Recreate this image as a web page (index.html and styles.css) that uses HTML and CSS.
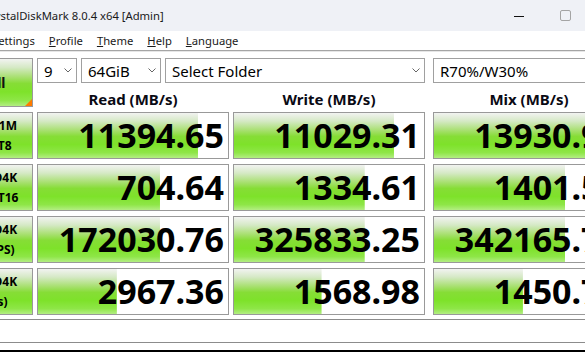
FILE: index.html
```html
<!DOCTYPE html>
<html lang="en">
<head>
    <meta charset="UTF-8">
    <meta name="viewport" content="width=device-width, initial-scale=1.0">
    <title>CrystalDiskMark 8.0.4 x64 [Admin]</title>
    <link rel="stylesheet" href="styles.css">
</head>
<body>
    <div class="window">
        <!-- Title bar -->
        <div class="titlebar">
            <span class="title">CrystalDiskMark 8.0.4 x64 [Admin]</span>
            <div class="caption">
                <span class="cap-btn">
                    <svg width="10" height="10" viewBox="0 0 10 10"><line x1="0" y1="5.5" x2="10" y2="5.5" stroke="#111" stroke-width="1"/></svg>
                </span>
                <span class="cap-btn">
                    <svg width="11" height="11" viewBox="0 0 11 11"><rect x="0.5" y="0.5" width="10" height="10" rx="1.5" fill="none" stroke="#a4a4a4"/></svg>
                </span>
                <span class="cap-btn">
                    <svg width="10" height="10" viewBox="0 0 10 10"><path d="M0 0 L10 10 M10 0 L0 10" stroke="#111"/></svg>
                </span>
            </div>
        </div>

        <!-- Menu -->
        <div class="menubar">
            <span><u>F</u>ile</span>
            <span><u>S</u>ettings</span>
            <span><u>P</u>rofile</span>
            <span><u>T</u>heme</span>
            <span><u>H</u>elp</span>
            <span><u>L</u>anguage</span>
        </div>

        <!-- Results board -->
        <div class="board">
            <button class="all-btn">All</button>

            <div class="controls">
                <div class="select sel-count">
                    <span class="value">9</span>
                    <svg class="chev" width="8" height="5" viewBox="0 0 8 5"><path d="M0.5 0.5 L4 4 L7.5 0.5" fill="none" stroke="#666"/></svg>
                </div>
                <div class="select sel-size">
                    <span class="value">64GiB</span>
                    <svg class="chev" width="8" height="5" viewBox="0 0 8 5"><path d="M0.5 0.5 L4 4 L7.5 0.5" fill="none" stroke="#666"/></svg>
                </div>
                <div class="select sel-drive">
                    <span class="value">Select Folder</span>
                    <svg class="chev" width="8" height="5" viewBox="0 0 8 5"><path d="M0.5 0.5 L4 4 L7.5 0.5" fill="none" stroke="#666"/></svg>
                </div>
            </div>
            <div class="select mix-col">
                <span class="value">R70%/W30%</span>
                <svg class="chev" width="8" height="5" viewBox="0 0 8 5"><path d="M0.5 0.5 L4 4 L7.5 0.5" fill="none" stroke="#666"/></svg>
            </div>

            <div class="head">Read (MB/s)</div>
            <div class="head">Write (MB/s)</div>
            <div class="head mix-col">Mix (MB/s)</div>

            <!-- SEQ1M -->
            <div class="label">SEQ1M<br>Q1T8</div>
            <div class="cell" style="background-size: 84.2% 100%">11394.65</div>
            <div class="cell" style="background-size: 84.2% 100%">11029.31</div>
            <div class="cell mix-col" style="background-size: 85.6% 100%">13930.98</div>

            <!-- RND4K Q32T16 -->
            <div class="label">RND4K<br>Q32T16</div>
            <div class="cell" style="background-size: 64.2% 100%">704.64</div>
            <div class="cell" style="background-size: 68.8% 100%">1334.61</div>
            <div class="cell mix-col" style="background-size: 69.1% 100%">1401.54</div>

            <!-- IOPS -->
            <div class="label">RND4K<br>(IOPS)</div>
            <div class="cell" style="background-size: 64.2% 100%">172030.76</div>
            <div class="cell" style="background-size: 68.8% 100%">325833.25</div>
            <div class="cell mix-col" style="background-size: 69.1% 100%">342165.74</div>

            <!-- latency -->
            <div class="label">RND4K<br>(μs)</div>
            <div class="cell" style="background-size: 41.5% 100%">2967.36</div>
            <div class="cell" style="background-size: 46.1% 100%">1568.98</div>
            <div class="cell mix-col" style="background-size: 46.8% 100%">1450.72</div>
        </div>

        <!-- Comment -->
        <div class="comment"></div>
    </div>
</body>
</html>
```

FILE: styles.css
```css
html, body {
    margin: 0;
    padding: 0;
    background-color: #000;
    overflow: hidden;
    height: 352px;
}

body {
    font-family: "Noto Sans", "DejaVu Sans", sans-serif;
    color: #000;
}

.window {
    width: 674px;
    height: 350px;
    margin-left: -40px;
    background-color: #fff;
    overflow: hidden;
}

/* title bar */
.titlebar {
    display: flex;
    align-items: center;
    height: 31px;
    padding-left: 23px;
    background-color: #eff1f6;
}

.title {
    font-size: 11.25px;
    color: #1a1a1a;
}

.caption {
    display: flex;
    margin-left: auto;
    height: 100%;
}

.cap-btn {
    display: flex;
    align-items: center;
    justify-content: center;
    width: 46px;
}

/* menu */
.menubar {
    display: flex;
    align-items: center;
    gap: 14px;
    height: 19px;
    font-size: 11.25px;
    color: #1a1a1a;
    border-bottom: 1px solid #a5a5a5;
    box-shadow: 0 1px 0 #e6e6e6;
}

/* board */
.board {
    display: grid;
    grid-template-columns: 73px 192px 192px 196px;
    grid-template-rows: 25px 19px repeat(4, 47px);
    column-gap: 4px;
    row-gap: 5px;
    margin-top: 7px;
}

.mix-col {
    margin-left: 4px;
}

.all-btn {
    grid-row: 1 / 3;
    position: relative;
    margin: 0;
    padding: 0;
    font-family: inherit;
    font-size: 14px;
    font-weight: bold;
    color: #111;
    border: 1px solid #999;
    background-image: linear-gradient(to bottom, #f2f3f1 0%, #d5e9c5 18%, #a9e072 38%, #86dd36 52%, #7ee22a 70%, #8ee647 88%, #b3ee83 100%);
}

.all-btn::after {
    content: "";
    position: absolute;
    right: 0;
    bottom: 0;
    border-style: solid;
    border-width: 0 0 7px 7px;
    border-color: transparent transparent #ff7a00 transparent;
}

.controls {
    grid-column: 2 / 4;
    display: flex;
    gap: 4px;
}

.select {
    display: flex;
    align-items: center;
    box-sizing: border-box;
    padding: 0 4px 0 6px;
    border: 1px solid #a0a0a0;
    background-color: #fff;
    font-size: 15px;
    white-space: nowrap;
}

.select .value {
    flex: 1;
}

.sel-count {
    width: 40px;
}

.sel-size {
    width: 80px;
}

.sel-drive {
    flex: 1;
}

.head {
    padding-top: 3px;
    line-height: 16px;
    font-size: 15px;
    font-weight: bold;
    text-align: center;
    color: #0a0a14;
}

.label {
    display: flex;
    flex-direction: column;
    justify-content: center;
    border: 1px solid #999;
    font-size: 12px;
    font-weight: bold;
    line-height: 20px;
    text-align: center;
    white-space: nowrap;
    background-image: linear-gradient(to bottom, #f2f3f1 0%, #d5e9c5 18%, #a9e072 38%, #86dd36 52%, #7ee22a 70%, #8ee647 88%, #b3ee83 100%);
}

.cell {
    display: flex;
    align-items: center;
    justify-content: flex-end;
    padding: 0 4px 2px 0;
    border: 1px solid #999;
    font-size: 34px;
    font-weight: bold;
    line-height: 34px;
    white-space: nowrap;
    overflow: hidden;
    background-color: #fff;
    background-repeat: no-repeat;
    background-position: left top;
    background-image: linear-gradient(to bottom, #f2f3f1 0%, #d5e9c5 18%, #a9e072 38%, #86dd36 52%, #7ee22a 70%, #8ee647 88%, #b3ee83 100%);
}

.comment {
    height: 22px;
    margin-top: 4px;
    border: 1px solid #8c8c8c;
    background-color: #fff;
}
```
